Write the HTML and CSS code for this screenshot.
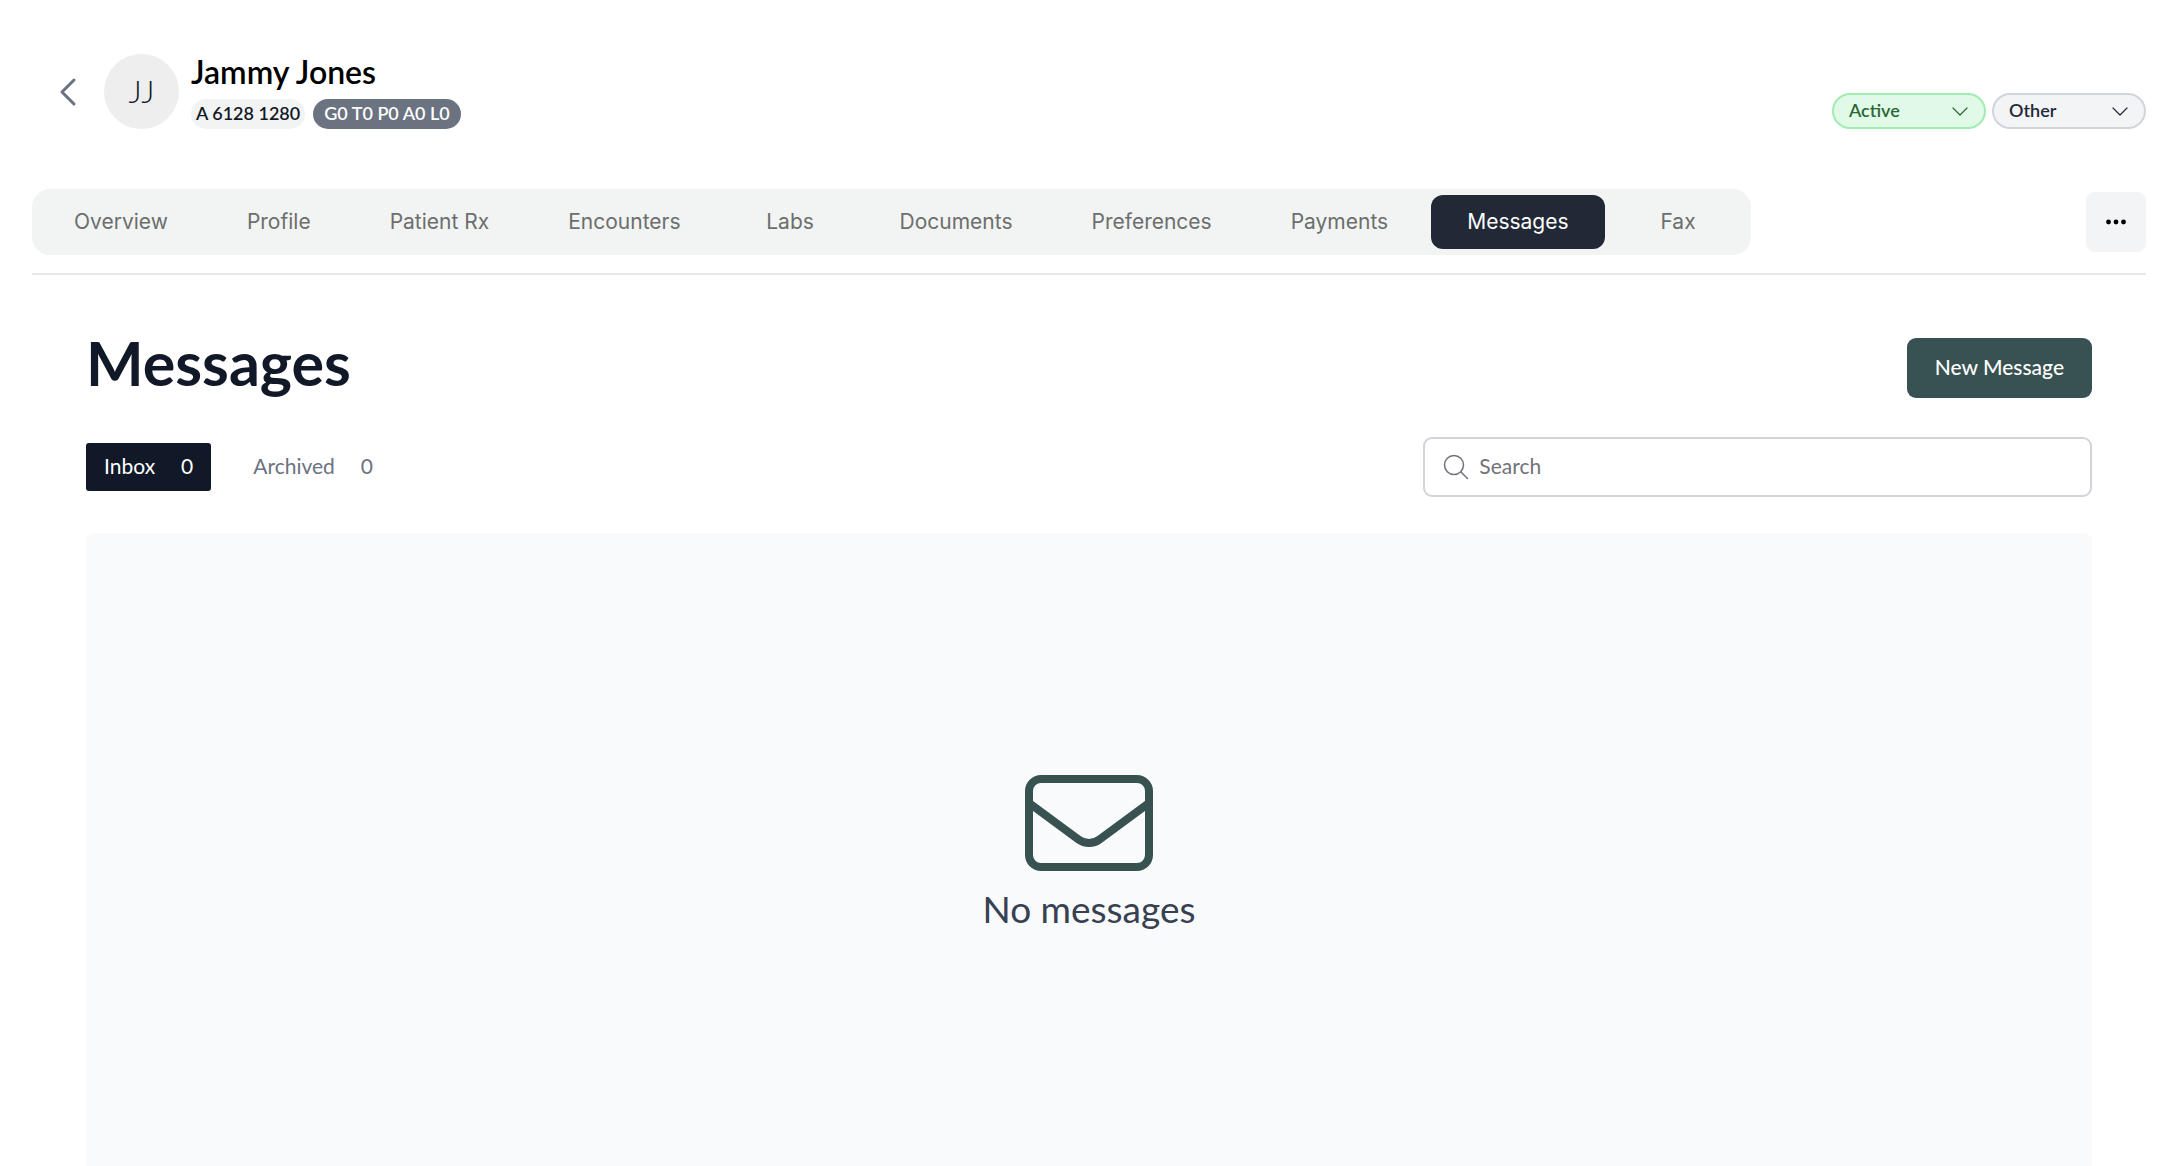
FILE: index.html
```html
<!DOCTYPE html>
<html lang="en">
<head>
  <meta charset="utf-8">
  <meta name="viewport" content="width=device-width, initial-scale=1">
  <title>Jammy Jones – Messages</title>
  <link rel="stylesheet" href="styles.css">
</head>
<body>
  <header class="patient">
    <a class="back" href="#" aria-label="Back">
      <svg width="18" height="30" viewBox="0 0 18 30" fill="none" stroke="currentColor" stroke-width="3" stroke-linecap="round" stroke-linejoin="round"><path d="M15 3 3 15l12 12"/></svg>
    </a>
    <div class="avatar">JJ</div>
    <div class="identity">
      <div class="name">Jammy Jones</div>
      <div class="badges">
        <span class="badge">A 6128 1280</span>
        <span class="badge badge-dark">G0 T0 P0 A0 L0</span>
      </div>
    </div>
    <div class="statuses">
      <div class="status status-active">
        <select aria-label="Status"><option>Active</option></select>
        <svg class="chevron" width="16" height="10" viewBox="0 0 16 10" fill="none" stroke="currentColor" stroke-width="1.2" stroke-linecap="round" stroke-linejoin="round"><path d="m1 1 7 7 7-7"/></svg>
      </div>
      <div class="status">
        <select aria-label="Category"><option>Other</option></select>
        <svg class="chevron" width="16" height="10" viewBox="0 0 16 10" fill="none" stroke="currentColor" stroke-width="1.2" stroke-linecap="round" stroke-linejoin="round"><path d="m1 1 7 7 7-7"/></svg>
      </div>
    </div>
  </header>

  <div class="toolbar">
    <nav class="tabs" aria-label="Patient sections">
      <a class="tab" href="#">Overview</a>
      <a class="tab" href="#">Profile</a>
      <a class="tab" href="#">Patient Rx</a>
      <a class="tab" href="#">Encounters</a>
      <a class="tab" href="#">Labs</a>
      <a class="tab" href="#">Documents</a>
      <a class="tab" href="#">Preferences</a>
      <a class="tab" href="#">Payments</a>
      <a class="tab tab-current" href="#" aria-current="page">Messages</a>
      <a class="tab" href="#">Fax</a>
    </nav>
    <button class="more" type="button" aria-label="More actions">
      <svg width="20" height="6" viewBox="0 0 20 6" fill="currentColor"><circle cx="2.5" cy="3" r="2.4"/><circle cx="10" cy="3" r="2.4"/><circle cx="17.5" cy="3" r="2.4"/></svg>
    </button>
  </div>

  <main class="content">
    <div class="heading">
      <h1>Messages</h1>
      <button class="new-message" type="button">New Message</button>
    </div>
    <div class="filters">
      <div class="folders">
        <button class="folder folder-current" type="button"><span>Inbox</span><span>0</span></button>
        <button class="folder" type="button"><span>Archived</span><span>0</span></button>
      </div>
      <label class="search">
        <svg width="26" height="26" viewBox="0 0 26 26" fill="none" stroke="currentColor" stroke-width="1.5" stroke-linecap="round"><circle cx="11" cy="11" r="9.5"/><path d="m18 18 6.500 6.500"/></svg>
        <input type="search" placeholder="Search" aria-label="Search">
      </label>
    </div>
    <section class="empty">
      <svg width="128" height="96" viewBox="0 0 128 96" fill="none" stroke="currentColor" stroke-width="8"><rect x="4" y="4" width="120" height="88" rx="12"/><path d="m4 28 49.500 36.500a17.500 17.500 0 0 0 21 0L124 28"/></svg>
      <p>No messages</p>
    </section>
  </main>
</body>
</html>
```
FILE: styles.css
```css
* {
  box-sizing: border-box;
}

body {
  display: flex;
  flex-direction: column;
  min-height: 100vh;
  margin: 0;
  padding: 0 22px 0 32px;
  background: #fff;
  color: #111827;
  font-family: Lato, "Open Sans", sans-serif;
  font-size: 21px;
}

a {
  color: inherit;
  text-decoration: none;
}

button,
input,
select {
  font: inherit;
}

button {
  border: 0;
  cursor: pointer;
}

svg {
  display: block;
  flex-shrink: 0;
}

.patient {
  display: flex;
  align-items: center;
  padding: 54px 0 60px 27px;
}

.back {
  color: #6b7280;
}

.avatar {
  display: grid;
  place-items: center;
  width: 75px;
  height: 75px;
  margin: 0 12px 0 27px;
  padding-bottom: 2px;
  border-radius: 50%;
  background: #eee;
  font-size: 32px;
  font-weight: 300;
}

.name {
  color: #000;
  font-size: 32px;
  font-weight: 600;
  line-height: 34px;
}

.badges {
  display: flex;
  gap: 8px;
  margin-top: 10px;
}

.badge {
  height: 30px;
  padding: 0 5px;
  border-radius: 15px;
  background: #f2f4f4;
  font-size: 18px;
  font-weight: 600;
  line-height: 28px;
}

.badge-dark {
  padding: 0 11px;
  background: #6b7280;
  color: #fff;
}

.statuses {
  display: flex;
  align-self: flex-end;
  gap: 6px;
  margin-left: auto;
}

.status {
  position: relative;
  width: 154px;
  color: #1f2937;
}

.status select {
  display: block;
  width: 100%;
  height: 36px;
  padding: 0 15px 2px;
  border: 2px solid #d1d5db;
  border-radius: 18px;
  background: #f3f4f6;
  color: inherit;
  font-size: 18px;
  font-weight: 600;
  appearance: none;
}

.status-active {
  color: #2b6536;
}

.status-active select {
  border-color: #a0ecb2;
  background: #e0fae7;
}

.chevron {
  position: absolute;
  top: 14px;
  right: 18px;
  pointer-events: none;
}

.toolbar {
  display: flex;
  align-items: center;
  justify-content: space-between;
  padding-bottom: 18px;
  border-bottom: 2px solid #e5e7eb;
}

.tabs {
  display: flex;
  gap: 7px;
  padding: 6px;
  border-radius: 18px;
  background: #f2f4f3;
  color: #6b6e6d;
  font-family: Inter, "Open Sans", sans-serif;
}

.tab {
  min-width: 133px;
  padding: 0 36px;
  border-radius: 12px;
  line-height: 54px;
  text-align: center;
  white-space: nowrap;
}

.tab-current {
  background: #212936;
  color: #fff;
}

.more {
  display: grid;
  place-items: center;
  width: 60px;
  height: 60px;
  border-radius: 9px;
  background: #f3f4f6;
  color: #000;
}

.content {
  display: flex;
  flex: 1;
  flex-direction: column;
  padding: 53px 54px 0;
}

.heading {
  display: flex;
  align-items: flex-end;
  justify-content: space-between;
}

h1 {
  margin: 0;
  font-size: 61px;
  font-weight: 700;
  line-height: 70px;
}

.new-message {
  height: 60px;
  padding: 0 28px 3px;
  border-radius: 9px;
  background: #385252;
  color: #fff;
  font-weight: 500;
}

.filters {
  display: flex;
  align-items: center;
  justify-content: space-between;
  margin: 39px 0 36px;
}

.folders {
  display: flex;
  gap: 24px;
}

.folder {
  display: flex;
  gap: 26px;
  align-items: center;
  height: 48px;
  padding: 0 18px 3px;
  border-radius: 3px;
  background: none;
  color: #6b7280;
}

.folder-current {
  background: #111827;
  color: #fff;
}

.search {
  display: flex;
  gap: 10px;
  align-items: center;
  width: 33.334%;
  height: 60px;
  padding: 0 18px;
  border: 2px solid #d1d5db;
  border-radius: 9px;
  color: #71717a;
}

.search input {
  flex: 1;
  min-width: 0;
  padding: 0 0 3px;
  border: 0;
  outline: 0;
  background: none;
}

.search input::placeholder {
  color: #71717a;
}

.empty {
  display: flex;
  flex: 1;
  flex-direction: column;
  gap: 16px;
  align-items: center;
  justify-content: center;
  padding-top: 6px;
  border-radius: 8px 8px 0 0;
  background: #f9fafc;
  color: #385252;
}

.empty p {
  margin: 0;
  color: #374151;
  font-size: 37px;
  line-height: 44px;
}
```
